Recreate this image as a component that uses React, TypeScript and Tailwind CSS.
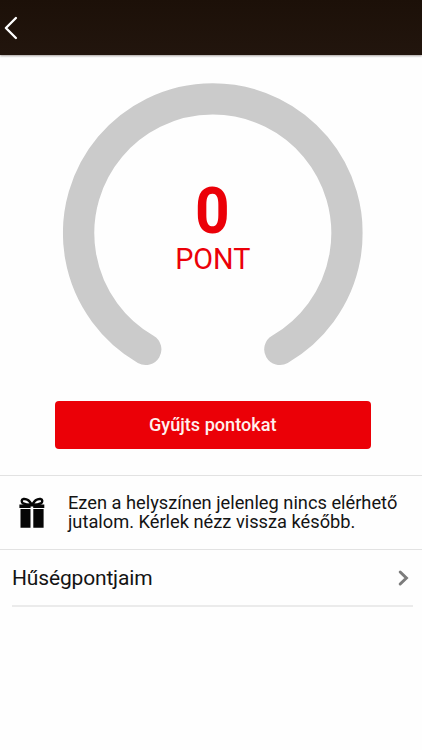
function BackIcon() {
  return (
    <svg className="ml-[4px] mt-px h-[24px] w-[14px]" viewBox="0 0 14 24" fill="none">
      <path d="M11.9 2 1.9 12 11.9 22" stroke="#fff" strokeWidth="2.4" strokeLinecap="round" strokeLinejoin="round" />
    </svg>
  );
}

function GiftIcon() {
  return (
    <svg className="mt-px h-[32px] w-[27px] shrink-0" viewBox="0 0 27 32" fill="#060606">
      <path
        d="M13 7.8C10.8 3.9 7.3 1.6 4.5 2 2.2 2.4 2.1 5.1 4.2 6.4 6.6 7.7 10.2 7.9 13 7.8ZM13 7.8C15.2 3.9 18.7 1.6 21.5 2 23.8 2.4 23.9 5.1 21.8 6.4 19.4 7.7 15.8 7.9 13 7.8Z"
        fill="none"
        stroke="#060606"
        strokeWidth="2.4"
      />
      <path d="M.4 7.6h24.9v3.5H14.2V9.6h-2.6v1.5H.4zM1.5 12h10v18.7h-10zM14.3 12h10.3v18.7H14.3z" />
    </svg>
  );
}

function PointsGauge() {
  return (
    <div className="mx-auto mt-[28px] grid h-[284px] w-[300px] translate-x-[1.8px]">
      <svg className="col-start-1 row-start-1 h-[284px] w-[300px]" viewBox="0 0 300 284" fill="none">
        <path d="M82.9 266.3A134.2 134.2 0 1 1 217.1 266.3" stroke="#cbcbcb" strokeWidth="31.4" strokeLinecap="round" />
      </svg>
      <div className="col-start-1 row-start-1 flex flex-col items-center pt-[96px] text-[#eb0008]">
        <span className="scale-x-[0.93] text-[65px] font-bold leading-[64px]">0</span>
        <span className="text-[28.8px] leading-[32px]">PONT</span>
      </div>
    </div>
  );
}

export default function App() {
  return (
    <div className="flex h-[750px] w-full flex-col overflow-hidden bg-[#fefefe] font-['Roboto',sans-serif] text-[#141414]">
      <header className="flex h-[55px] shrink-0 items-center bg-linear-to-b from-[#1c1008] to-[#22150d] shadow-[0_1px_2px_rgba(30,15,10,0.4)]">
        <BackIcon />
      </header>
      <PointsGauge />
      <button className="ml-[54.5px] mt-[33.5px] h-[48.5px] w-[316.5px] shrink-0 rounded-[4px] bg-[#eb0007] text-[18.1px] font-medium text-[#fff0ee]">
        Gyűjts pontokat
      </button>
      <section className="mt-[26px] flex h-[75px] shrink-0 items-center border-t border-b border-[#e2e2e2] pl-[19px]">
        <GiftIcon />
        <p className="ml-[22px] whitespace-nowrap text-[18.25px] leading-[18.3px]">
          Ezen a helyszínen jelenleg nincs elérhető
          <br />
          jutalom. Kérlek nézz vissza később.
        </p>
      </section>
      <div className="ml-[12px] mr-[9px] flex h-[57px] shrink-0 items-center justify-between border-b-2 border-[#ebebeb]">
        <span className="pt-[2px] text-[21px] tracking-[-0.16px]">Hűségpontjaim</span>
        <svg className="mr-[3px] mt-px h-[18px] w-[13px]" viewBox="0 0 13 18" fill="none">
          <path d="M3.2 3 9.4 9 3.2 15" stroke="#7c7c7c" strokeWidth="3" strokeLinecap="round" />
        </svg>
      </div>
    </div>
  );
}
